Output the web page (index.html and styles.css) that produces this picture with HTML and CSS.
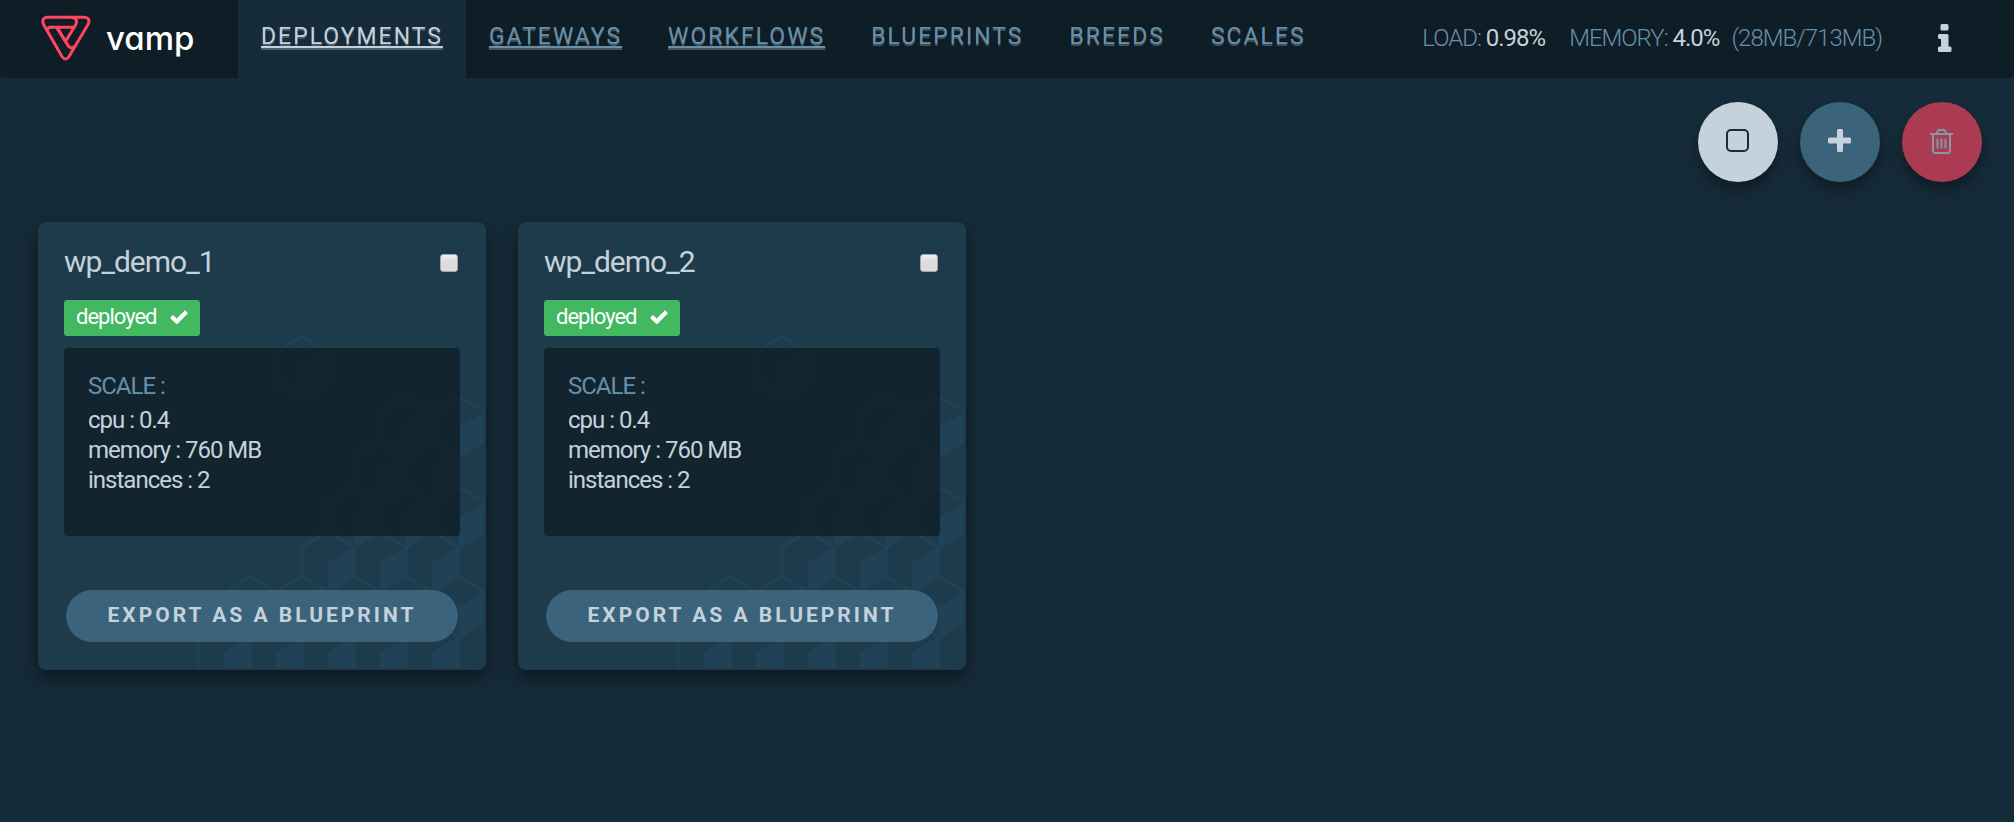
FILE: index.html
```html
<!DOCTYPE html>
<html lang="en">
<head>
<meta charset="utf-8">
<title>Vamp - Deployments</title>
<link rel="stylesheet" href="styles.css">
</head>
<body>
<svg class="sprite" aria-hidden="true">
  <defs>
    <g id="cube">
      <path class="cube-edge" d="M0-30 26-15V15L0 30-26 15V-15Z"/>
      <path class="cube-face" d="M0 0 26-15V15L0 30Z"/>
    </g>
    <symbol id="cubes" viewBox="0 0 446 446">
      <use href="#cube" x="264" y="145"/>
      <use href="#cube" x="368" y="205"/><use href="#cube" x="421" y="205"/>
      <use href="#cube" x="342" y="250"/><use href="#cube" x="394" y="250"/>
      <use href="#cube" x="316" y="295"/><use href="#cube" x="368" y="295"/><use href="#cube" x="421" y="295"/>
      <use href="#cube" x="290" y="340"/><use href="#cube" x="342" y="340"/><use href="#cube" x="394" y="340"/><use href="#cube" x="447" y="340"/>
      <use href="#cube" x="212" y="385"/><use href="#cube" x="264" y="385"/><use href="#cube" x="316" y="385"/><use href="#cube" x="368" y="385"/><use href="#cube" x="421" y="385"/>
      <use href="#cube" x="186" y="430"/><use href="#cube" x="238" y="430"/><use href="#cube" x="290" y="430"/><use href="#cube" x="342" y="430"/><use href="#cube" x="394" y="430"/><use href="#cube" x="447" y="430"/>
    </symbol>
    <symbol id="check" viewBox="0 0 18 14">
      <path d="M1.500 6.500 6.900 11.500 16.500 1.800" fill="none" stroke="currentColor" stroke-width="4.200"/>
    </symbol>
  </defs>
</svg>

<header class="navbar">
  <a class="brand" href="#">
    <svg class="brand-mark" viewBox="0 0 50 46" aria-hidden="true">
      <path d="M6 2.200H43.500Q50 3 47 9.500L28 41.500Q24.500 46.500 21 41.500L2.600 9.500Q0 3 6 2.200Z"/>
      <path d="M30 2.200Q37.500 3 34.800 9.500L24.500 26.500 16 13"/>
      <path d="M5.800 14.500Q8 11.500 12 12.300H33.500"/>
      <path d="M16.500 13 27 30.500Q30 34.500 33.500 31.500"/>
    </svg>
    <span class="brand-name">vamp</span>
  </a>
  <nav class="menu">
    <a class="menu-link menu-link-live menu-link-active" href="#">DEPLOYMENTS</a>
    <a class="menu-link menu-link-live" href="#">GATEWAYS</a>
    <a class="menu-link menu-link-live" href="#">WORKFLOWS</a>
    <a class="menu-link" href="#">BLUEPRINTS</a>
    <a class="menu-link" href="#">BREEDS</a>
    <a class="menu-link" href="#">SCALES</a>
  </nav>
  <div class="stats">
    <span>LOAD: <b class="stat-value">0.98%</b></span>
    <span>MEMORY: <b class="stat-value">4.0%</b></span>
    <span class="stat-detail">(28MB/713MB)</span>
  </div>
  <button class="info" type="button" aria-label="Info">
    <svg class="info-icon" viewBox="0 0 14 28" aria-hidden="true">
      <path d="M4 0H9Q10.500 0 10.500 1.500V5Q10.500 6.500 9 6.500H4Q2.500 6.500 2.500 5V1.500Q2.500 0 4 0ZM1.500 10H9Q10.500 10 10.500 11.500V22.500H12Q13.500 22.500 13.500 24V26.500Q13.500 28 12 28H1.500Q0 28 0 26.500V24Q0 22.500 1.500 22.500H3V15H1.500Q0 15 0 13.500V11.500Q0 10 1.500 10Z"/>
    </svg>
  </button>
</header>

<main class="page">
  <div class="actions">
    <button class="round round-select" type="button" aria-label="Select all">
      <svg class="round-icon" viewBox="0 0 24 24" aria-hidden="true"><rect x="1" y="1" width="21" height="21" rx="4" fill="none" stroke="currentColor" stroke-width="2"/></svg>
    </button>
    <button class="round round-add" type="button" aria-label="Add">
      <svg class="round-icon" viewBox="0 0 24 24" aria-hidden="true"><path fill="currentColor" d="M10.500 0H13.500Q15 0 15 1.500V8.500H21.500Q23 8.500 23 10V13Q23 14.500 21.500 14.500H15V21.500Q15 23 13.500 23H10.500Q9 23 9 21.500V14.500H1.500Q0 14.500 0 13V10Q0 8.500 1.500 8.500H9V1.500Q9 0 10.500 0Z"/></svg>
    </button>
    <button class="round round-delete" type="button" aria-label="Delete">
      <svg class="round-icon" viewBox="0 0 24 24" aria-hidden="true"><path fill="none" stroke="currentColor" stroke-width="2" d="M0 5H23M7 5Q7 1 9.500 1H13.500Q16 1 16 5M3 5V21.500Q3 24 5 24H18Q20 24 20 21.500V5M7.500 9.500V19.500M11.500 9.500V19.500M15.500 9.500V19.500"/></svg>
    </button>
  </div>

  <section class="cards">
    <article class="card">
      <svg class="card-pattern" viewBox="0 0 446 446" aria-hidden="true"><use href="#cubes"/></svg>
      <header class="card-head">
        <h2 class="card-title"><label for="pick-1">wp_demo_1</label></h2>
        <input class="pick" id="pick-1" type="checkbox">
      </header>
      <span class="badge">deployed <svg class="badge-icon" aria-hidden="true"><use href="#check"/></svg></span>
      <div class="panel">
        <h3 class="panel-title">SCALE :</h3>
        <p class="panel-line">cpu : 0.4</p>
        <p class="panel-line">memory : 760 MB</p>
        <p class="panel-line">instances : 2</p>
      </div>
      <button class="export" type="button">EXPORT AS A BLUEPRINT</button>
    </article>
    <article class="card">
      <svg class="card-pattern" viewBox="0 0 446 446" aria-hidden="true"><use href="#cubes"/></svg>
      <header class="card-head">
        <h2 class="card-title"><label for="pick-2">wp_demo_2</label></h2>
        <input class="pick" id="pick-2" type="checkbox">
      </header>
      <span class="badge">deployed <svg class="badge-icon" aria-hidden="true"><use href="#check"/></svg></span>
      <div class="panel">
        <h3 class="panel-title">SCALE :</h3>
        <p class="panel-line">cpu : 0.4</p>
        <p class="panel-line">memory : 760 MB</p>
        <p class="panel-line">instances : 2</p>
      </div>
      <button class="export" type="button">EXPORT AS A BLUEPRINT</button>
    </article>
  </section>
</main>
</body>
</html>
```
FILE: styles.css
```css
:root {
  --page: #162c3a;
  --bar: #0f1e26;
  --card: #1d3b4b;
  --cube: #214256;
  --steel: #3b647c;
  --link: #6790ab;
  --light: #c5d2dc;
}

* {
  box-sizing: border-box;
}

body {
  margin: 0;
  min-height: 100vh;
  background: var(--page);
  color: var(--light);
  font-family: Roboto, "Liberation Sans", sans-serif;
  font-size: 24px;
  letter-spacing: -1px;
}

button {
  border: 0;
  padding: 0;
  font-family: inherit;
  cursor: pointer;
}

.sprite {
  position: absolute;
  width: 0;
  height: 0;
}

.cube-edge {
  fill: none;
  stroke: var(--cube);
  stroke-width: 3;
}

.cube-face {
  fill: var(--cube);
}

/* top bar */

.navbar {
  display: flex;
  align-items: stretch;
  height: 78px;
  background: var(--bar);
  border-radius: 0 0 4px 4px;
}

.brand {
  display: flex;
  align-items: center;
  gap: 15px;
  width: 238px;
  padding-left: 41px;
  padding-bottom: 2px;
  color: #fff;
  text-decoration: none;
}

.brand-mark {
  width: 50px;
  height: 46px;
  fill: none;
  stroke: #ff4560;
  stroke-width: 3;
  stroke-linejoin: round;
  stroke-linecap: round;
}

.brand-name {
  font-family: Inter, sans-serif;
  font-size: 33px;
  font-weight: 500;
  font-feature-settings: "cv11";
  letter-spacing: normal;
}

.menu {
  display: flex;
}

.menu-link {
  display: flex;
  align-items: center;
  padding: 0 23px 6px;
  color: var(--link);
  font-size: 23px;
  letter-spacing: 2px;
  text-decoration: none;
  text-shadow: 0 2px 0 rgba(197, 210, 220, 0.3);
}

.menu-link-live {
  text-decoration: underline;
  text-decoration-thickness: 2px;
  text-underline-offset: 2px;
  text-decoration-skip-ink: none;
}

.menu-link-active {
  background: var(--page);
  color: var(--light);
}

.stats {
  display: flex;
  align-items: center;
  gap: 24px;
  margin-left: auto;
  padding-bottom: 2px;
  color: var(--link);
  font-weight: 300;
}

.stat-value {
  color: var(--light);
  font-weight: 400;
}

.stat-detail {
  margin-left: -12px;
}

.info {
  margin: 0 62px 0 56px;
  padding-bottom: 2px;
  background: none;
}

.info-icon {
  display: block;
  width: 14px;
  height: 28px;
  fill: var(--light);
}

/* page */

.actions {
  display: flex;
  justify-content: flex-end;
  gap: 22px;
  padding: 24px 32px 40px;
}

.round {
  display: flex;
  align-items: center;
  justify-content: center;
  width: 80px;
  height: 80px;
  padding-bottom: 2px;
  border-radius: 50%;
  box-shadow: 0 8px 16px rgba(0, 0, 0, 0.4);
}

.round-icon {
  width: 24px;
  height: 24px;
  overflow: visible;
}

.round-select {
  background: var(--light);
  color: var(--page);
}

.round-add {
  background: var(--steel);
  color: var(--light);
}

.round-delete {
  background: #aa3b52;
  color: #8497a6;
}

.cards {
  display: grid;
  grid-template-columns: repeat(auto-fill, 448px);
  gap: 32px;
  padding: 0 38px 40px;
}

.card {
  position: relative;
  display: flex;
  flex-direction: column;
  align-items: flex-start;
  padding: 22px 26px 28px;
  background: var(--card);
  border-radius: 8px;
  box-shadow: 0 8px 20px rgba(0, 0, 0, 0.5);
}

.card > * {
  position: relative;
}

.card > .card-pattern {
  position: absolute;
  top: 0;
  left: 0;
  width: 446px;
  height: 446px;
}

.card-head {
  display: flex;
  align-items: center;
  justify-content: space-between;
  width: 100%;
  padding-right: 2px;
}

.card-title {
  margin: 0;
  font-size: 30px;
  font-weight: 400;
  line-height: 36px;
}

.pick {
  appearance: none;
  width: 18px;
  height: 18px;
  margin: 2px 0 0;
  border: 1px solid #a5a5a5;
  border-radius: 3px;
  background: linear-gradient(#efefef, #dcdcdc 40%);
}

.badge {
  display: flex;
  align-items: center;
  gap: 13px;
  height: 36px;
  margin-top: 20px;
  padding: 0 12px 3px;
  background: #42b861;
  border-radius: 3px;
  color: #fff;
  font-size: 22px;
}

.badge-icon {
  width: 18px;
  height: 14px;
}

.panel {
  width: 100%;
  margin-top: 12px;
  padding: 23px 24px 41px;
  background: rgba(18, 35, 43, 0.9);
  border-radius: 4px;
}

.panel-title {
  margin: 0 0 4px;
  color: var(--link);
  font-size: 24px;
  font-weight: 400;
  line-height: 30px;
}

.panel-line {
  margin: 0;
  line-height: 30px;
}

.export {
  align-self: stretch;
  height: 52px;
  margin: 54px 2px 0;
  padding-bottom: 2px;
  background: var(--steel);
  border-radius: 26px;
  color: var(--light);
  font-size: 21px;
  font-weight: 700;
  letter-spacing: 3px;
}
```
